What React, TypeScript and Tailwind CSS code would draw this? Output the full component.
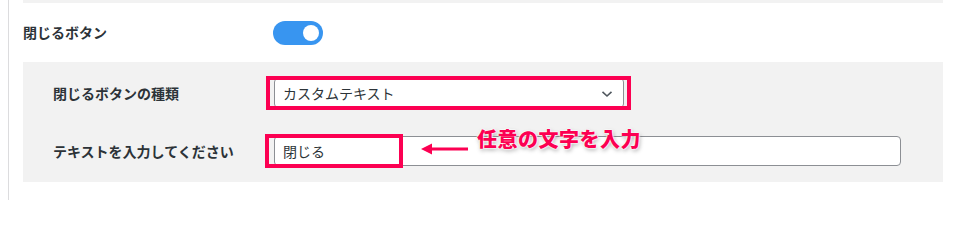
import React from 'react';

const font = { fontFamily: '"Noto Sans", "Noto Sans CJK JP", sans-serif' };

const Toggle = () => (
  <div className="flex h-[24px] w-[50px] items-center justify-end rounded-full bg-[#3895f0] pr-[4px]">
    <div className="h-[16px] w-[16px] rounded-full bg-white" />
  </div>
);

const App = () => {
  return (
    <div className="h-[200px] w-[963px] bg-white pl-[8px]" style={font}>
      <div className="flex h-full border-l border-[#dcdcde] pl-[14px] pr-[20px]">
        <div className="flex w-[920px] flex-col">
          <div className="h-[3px] bg-[#f2f2f2]" />

          {/* close button toggle */}
          <div className="flex h-[59px] items-center">
            <div className="w-[250px] text-[14px] font-bold text-[#2c3338]">閉じるボタン</div>
            <Toggle />
          </div>

          {/* sub settings */}
          <div className="flex h-[120px] flex-col bg-[#f2f2f2] px-[30px]">
            <div className="flex h-[60px] items-center pt-[2px]">
              <div className="w-[221px] text-[14px] font-bold text-[#2c3338]">閉じるボタンの種類</div>
              <div className="relative">
                <div className="flex h-[30px] w-[350px] items-center justify-between rounded-[4px] border border-[#8c8f94] bg-white pl-[8px] pr-[10px]">
                  <span className="text-[14px] text-[#2c3338]">カスタムテキスト</span>
                  <svg width="12" height="8" viewBox="0 0 12 8" className="mt-[1px]">
                    <path d="M1.5 1.8 L6 6 L10.5 1.8" fill="none" stroke="#50575e" strokeWidth="1.6" />
                  </svg>
                </div>
                <div className="pointer-events-none absolute left-[-8px] top-[-2px] h-[34px] w-[365px] border-[4px] border-[#fc0052]" />
              </div>
            </div>

            <div className="flex h-[60px] items-center pb-[2px]">
              <div className="w-[221px] text-[14px] font-bold text-[#2c3338]">テキストを入力してください</div>
              <div className="relative">
                <div className="flex h-[30px] w-[627px] items-center rounded-[4px] border border-[#8c8f94] bg-white pl-[8px]">
                  <span className="text-[14px] text-[#2c3338]">閉じる</span>
                </div>
                <div className="pointer-events-none absolute left-[-9px] top-[-2px] h-[34px] w-[138px] border-[4px] border-[#fc0052]" />
                <svg
                  width="48"
                  height="12"
                  viewBox="0 0 48 12"
                  className="absolute left-[147px] top-[7px]"
                >
                  <line x1="9" y1="6" x2="47" y2="6" stroke="#fc0052" strokeWidth="3" />
                  <polygon points="0,6 11,0.5 11,11.5" fill="#fc0052" />
                </svg>
                <div className="absolute left-[203px] top-[-11px] whitespace-nowrap text-[20px] font-black tracking-[0.5px] text-[#fc0052] [text-shadow:0_0_2px_#fff,0_0_2px_#fff,0_0_2px_#fff,1px_2px_4px_rgba(0,0,0,0.35)]">
                  任意の文字を入力
                </div>
              </div>
            </div>
          </div>
        </div>
      </div>
    </div>
  );
};

export default App;
